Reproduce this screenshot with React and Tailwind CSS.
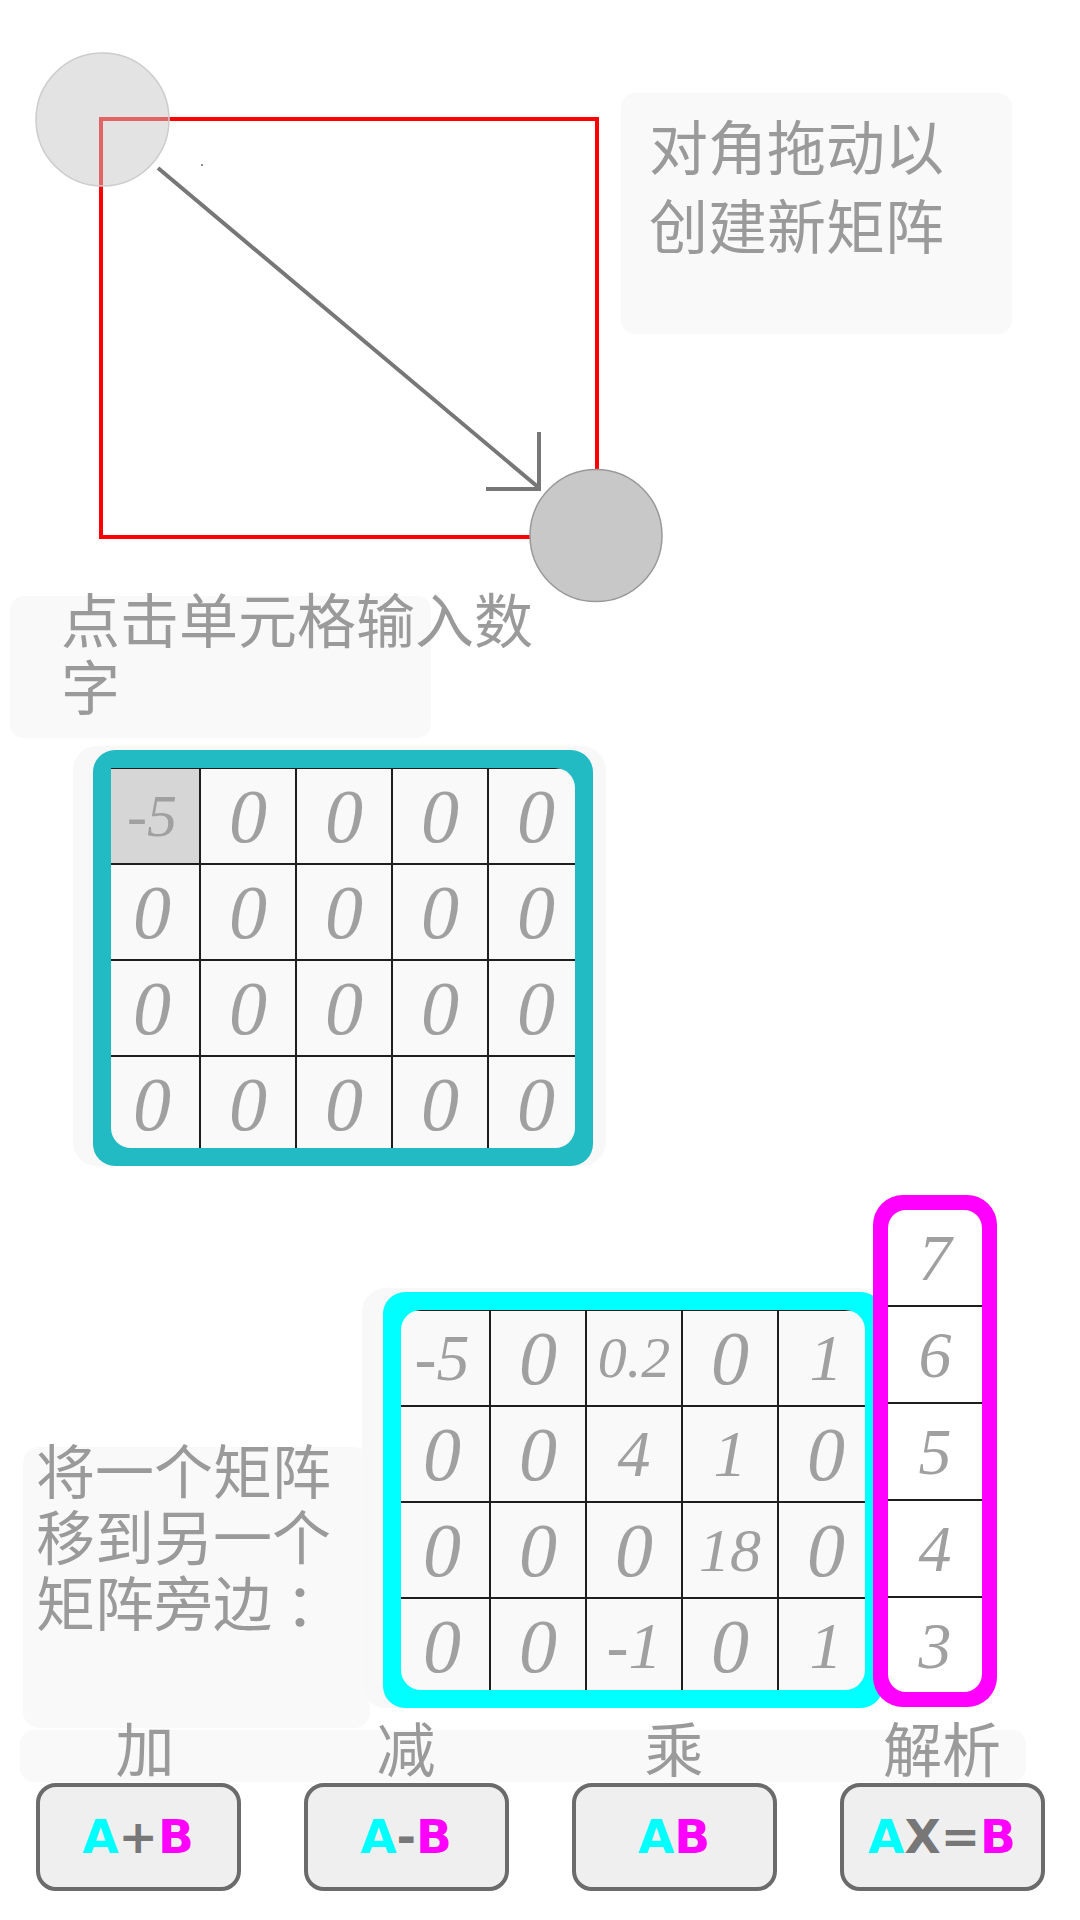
import React from "react";

const cjk = { fontFamily: '"Noto Sans CJK SC", "Noto Sans", sans-serif' };
const serif = { fontFamily: '"Liberation Serif", "DejaVu Serif", serif' };
const bold = { fontFamily: '"DejaVu Sans", "Liberation Sans", sans-serif' };

// 每个数字的字号（按内容）
const numSize = (v) => {
  if (v === "0") return "text-[76px]";
  if (v === "0.2") return "text-[58px]";
  if (v === "18") return "text-[62px]";
  return "text-[66px]";
};

const Cell = ({ value, className = "", size }) => (
  <div
    className={`flex items-center justify-center border-l-2 border-t-2 border-[#1e1e1e] text-[#a0a0a0] italic leading-none ${size || numSize(value)} ${className}`}
    style={serif}
  >
    {value}
  </div>
);

const DragHint = () => (
  <svg
    className="absolute left-0 top-0 w-[700px] h-[620px] pointer-events-none"
    viewBox="0 0 700 620"
  >
    <rect x="101" y="119" width="496" height="418" fill="none" stroke="#ff0000" strokeWidth="4" />
    <line x1="158" y1="168" x2="538" y2="487" stroke="#777" strokeWidth="4" />
    <polyline points="539,432 539,489 486,489" fill="none" stroke="#777" strokeWidth="4" />
    <circle cx="102.5" cy="119.5" r="66.5" fill="rgba(200,200,200,0.5)" stroke="#cccccc" strokeWidth="1.5" />
    <circle cx="596" cy="535.5" r="66" fill="#c8c8c8" stroke="#999999" strokeWidth="1.5" />
    <circle cx="202" cy="165" r="1" fill="#666" />
  </svg>
);

const matA = [
  ["-5", "0", "0", "0", "0"],
  ["0", "0", "0", "0", "0"],
  ["0", "0", "0", "0", "0"],
  ["0", "0", "0", "0", "0"],
];

const matB = [
  ["-5", "0", "0.2", "0", "1"],
  ["0", "0", "4", "1", "0"],
  ["0", "0", "0", "18", "0"],
  ["0", "0", "-1", "0", "1"],
];

const vecB = ["7", "6", "5", "4", "3"];

const ops = [
  { label: "加", pad: "pl-[14px]", parts: [["A", "text-[#00ffff]"], ["+", "text-[#777777]"], ["B", "text-[#ff00ff]"]] },
  { label: "减", pad: "", parts: [["A", "text-[#00ffff]"], ["-", "text-[#777777]"], ["B", "text-[#ff00ff]"]] },
  { label: "乘", pad: "", parts: [["A", "text-[#00ffff]"], ["B", "text-[#ff00ff]"]] },
  { label: "解析", pad: "", parts: [["A", "text-[#00ffff]"], ["X=", "text-[#777777]"], ["B", "text-[#ff00ff]"]] },
];

export default function App() {
  return (
    <div className="w-[1080px] h-[1920px] bg-white overflow-hidden text-[#9a9a9a]" style={cjk}>
      {/* 拖动提示 */}
      <div className="relative h-[596px]">
        <DragHint />
        <div className="relative ml-[621px] pt-[93px]">
          <div className="w-[391px] h-[241px] rounded-[14px] bg-[#f9f9f9] pl-[28px] pt-[12px]">
            <p className="w-[300px] text-[59px] leading-[79px]">对角拖动以创建新矩阵</p>
          </div>
        </div>
      </div>

      {/* 单元格提示 */}
      <div className="flow-root ml-[10px] w-[421px] h-[142px] rounded-[14px] bg-[#f9f9f9] pl-[51px]">
        <p className="-mt-[12px] w-[480px] text-[59px] leading-[67px]">点击单元格输入数字</p>
      </div>

      {/* 矩阵A */}
      <div className="mt-[8px] ml-[73px] w-[533px] pl-[20px] pt-[4px] rounded-[24px] bg-[#f8f8f8]">
        <div className="w-[500px] p-[18px] rounded-[22px] bg-[#22bbc4]">
          <div className="w-[464px] h-[380px] overflow-hidden rounded-[20px] rounded-tl-none bg-[#f9f9f9]">
            <div className="-ml-[8px] -mt-[1px] grid grid-cols-[repeat(5,96px)] grid-rows-[repeat(4,96px)]">
              {matA.flat().map((v, i) => (
                <Cell
                  key={i}
                  value={v}
                  size={i === 0 ? "text-[60px]" : undefined}
                  className={i === 0 ? "bg-[#d6d6d6]" : ""}
                />
              ))}
            </div>
          </div>
        </div>
      </div>

      {/* 矩阵旁边 */}
      <div className="flex items-start h-[562px]">
        <div className="mt-[281px] ml-[23px] w-[347px] h-[281px] shrink-0 rounded-[16px] bg-[#f9f9f9] pl-[13px]">
          <p className="-mt-[11px] w-[320px] text-[59px] leading-[66px]">将一个矩阵移到另一个矩阵旁边 ：</p>
        </div>
        <div className="mt-[122px] -ml-[8px] w-[521px] shrink-0 pl-[21px] pt-[4px] rounded-[24px] bg-[#f8f8f8]">
          <div className="w-[500px] p-[18px] rounded-[22px] bg-[#00ffff]">
            <div className="w-[464px] h-[380px] overflow-hidden rounded-[20px] bg-[#f9f9f9]">
              <div className="-ml-[8px] -mt-[1px] grid grid-cols-[repeat(5,96px)] grid-rows-[repeat(4,96px)]">
                {matB.flat().map((v, i) => (
                  <Cell key={i} value={v} />
                ))}
              </div>
            </div>
          </div>
        </div>
        <div className="relative mt-[29px] -ml-[10px] w-[124px] shrink-0 p-[15px] rounded-[30px] bg-[#ff00ff]">
          <div className="w-[94px] h-[482px] overflow-hidden rounded-[18px] bg-white">
            <div className="-mt-[2px] -ml-[2px] grid grid-rows-[repeat(5,97px)]">
              {vecB.map((v, i) => (
                <Cell key={i} value={v} />
              ))}
            </div>
          </div>
        </div>
      </div>

      {/* 运算标签 */}
      <div className="mt-[2px] ml-[20px] w-[1006px] h-[52px] rounded-[14px] bg-[#f9f9f9]">
        <div className="-ml-[16px] w-[1072px] grid grid-cols-4">
          {ops.map((op) => (
            <div key={op.label} className={`text-center text-[59px] leading-[34px] ${op.pad}`}>
              {op.label}
            </div>
          ))}
        </div>
      </div>

      {/* 运算按钮 */}
      <div className="mt-[1px] ml-[4px] w-[1072px] grid grid-cols-4">
        {ops.map((op) => (
          <button
            key={op.label}
            className="mx-auto w-[205px] h-[108px] flex items-center justify-center rounded-[20px] border-[4px] border-[#6b6b6b] bg-[#efefef] text-[47px] font-bold"
            style={bold}
          >
            {op.parts.map(([t, c], i) => (
              <span key={i} className={c}>
                {t}
              </span>
            ))}
          </button>
        ))}
      </div>
    </div>
  );
}
